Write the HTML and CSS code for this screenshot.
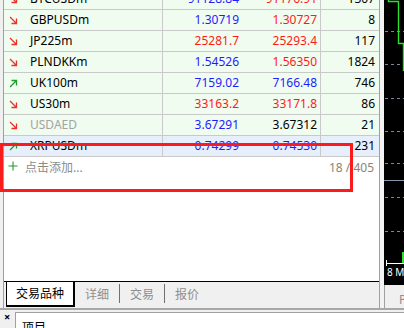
FILE: index.html
```html
<!DOCTYPE html>
<html lang="zh-CN">
<head>
    <meta charset="UTF-8">
    <title>市场报价</title>
    <link rel="stylesheet" href="styles.css">
</head>
<body>

    <div class="workspace">
        <!-- Market watch panel -->
        <div class="watch">
            <div class="quotes">
                <div class="quote-list">
                    <div class="row">
                        <div class="cell symbol"><svg class="arrow" viewBox="0 0 9 9"><path d="M1 1 L7.5 7.5 M2.5 7.5 H7.5 V2.5" stroke="#e8332b" stroke-width="1.3" fill="none"/></svg>BTCUSDm</div>
                        <div class="cell num bid blue">91128.84</div>
                        <div class="cell num red">91176.91</div>
                        <div class="cell num">1307</div>
                    </div>
                    <div class="row">
                        <div class="cell symbol"><svg class="arrow" viewBox="0 0 9 9"><path d="M1 1 L7.5 7.5 M2.5 7.5 H7.5 V2.5" stroke="#e8332b" stroke-width="1.3" fill="none"/></svg>GBPUSDm</div>
                        <div class="cell num bid blue">1.30719</div>
                        <div class="cell num red">1.30727</div>
                        <div class="cell num">8</div>
                    </div>
                    <div class="row">
                        <div class="cell symbol"><svg class="arrow" viewBox="0 0 9 9"><path d="M1 1 L7.5 7.5 M2.5 7.5 H7.5 V2.5" stroke="#e8332b" stroke-width="1.3" fill="none"/></svg>JP225m</div>
                        <div class="cell num bid red">25281.7</div>
                        <div class="cell num red">25293.4</div>
                        <div class="cell num">117</div>
                    </div>
                    <div class="row">
                        <div class="cell symbol"><svg class="arrow" viewBox="0 0 9 9"><path d="M1 1 L7.5 7.5 M2.5 7.5 H7.5 V2.5" stroke="#e8332b" stroke-width="1.3" fill="none"/></svg>PLNDKKm</div>
                        <div class="cell num bid blue">1.54526</div>
                        <div class="cell num red">1.56350</div>
                        <div class="cell num">1824</div>
                    </div>
                    <div class="row">
                        <div class="cell symbol"><svg class="arrow" viewBox="0 0 9 9"><path d="M1 8 L7.5 1.5 M2.5 1.5 H7.5 V6.5" stroke="#1f9a2c" stroke-width="1.3" fill="none"/></svg>UK100m</div>
                        <div class="cell num bid blue">7159.02</div>
                        <div class="cell num blue">7166.48</div>
                        <div class="cell num">746</div>
                    </div>
                    <div class="row">
                        <div class="cell symbol"><svg class="arrow" viewBox="0 0 9 9"><path d="M1 1 L7.5 7.5 M2.5 7.5 H7.5 V2.5" stroke="#e8332b" stroke-width="1.3" fill="none"/></svg>US30m</div>
                        <div class="cell num bid red">33163.2</div>
                        <div class="cell num red">33171.8</div>
                        <div class="cell num">86</div>
                    </div>
                    <div class="row">
                        <div class="cell symbol muted"><svg class="arrow" viewBox="0 0 9 9"><path d="M1 1 L7.5 7.5 M2.5 7.5 H7.5 V2.5" stroke="#e8332b" stroke-width="1.3" fill="none"/></svg>USDAED</div>
                        <div class="cell num bid blue">3.67291</div>
                        <div class="cell num">3.67312</div>
                        <div class="cell num">21</div>
                    </div>
                    <div class="row selected">
                        <div class="cell symbol"><svg class="arrow" viewBox="0 0 9 9"><path d="M1 8 L7.5 1.5 M2.5 1.5 H7.5 V6.5" stroke="#1f9a2c" stroke-width="1.3" fill="none"/></svg>XRPUSDm</div>
                        <div class="cell num bid blue">0.74299</div>
                        <div class="cell num blue">0.74530</div>
                        <div class="cell num">231</div>
                    </div>
                    <div class="add-row">
                        <svg class="plus" viewBox="0 0 10 10"><path d="M5 0.5 V9.5 M0.5 5 H9.5" stroke="#1f9a2c" stroke-width="1.1" fill="none"/></svg>
                        <span class="add-text">点击添加...</span>
                        <span class="count">18 / 405</span>
                    </div>
                </div>
            </div>

            <!-- Bottom tabs -->
            <div class="tabs">
                <div class="tab active">交易品种</div>
                <div class="tab">详细</div>
                <div class="tab">交易</div>
                <div class="tab last">报价</div>
            </div>
        </div>

        <div class="splitter"></div>

        <!-- Chart window (only its left edge is visible) -->
        <div class="chart">
            <div class="chart-view">
                <svg class="chart-svg" viewBox="0 0 20 285" width="20" height="285">
                    <g stroke="#7d8894" stroke-width="1" stroke-dasharray="3 3">
                        <line x1="1" y1="31.5" x2="20" y2="31.5"/>
                        <line x1="1" y1="64.5" x2="20" y2="64.5"/>
                        <line x1="1" y1="98.5" x2="20" y2="98.5"/>
                        <line x1="1" y1="131.5" x2="20" y2="131.5"/>
                        <line x1="1" y1="163.5" x2="20" y2="163.5"/>
                        <line x1="1" y1="197.5" x2="20" y2="197.5"/>
                        <line x1="1" y1="231.5" x2="20" y2="231.5"/>
                    </g>
                    <line x1="0" y1="180.5" x2="20" y2="180.5" stroke="#8696ad" stroke-width="1"/>
                    <path d="M4.5 0 V1.5 H14.5 V43.5 H19.5 V71" stroke="#2ee02e" stroke-width="1.4" fill="none"/>
                    <rect x="18" y="252" width="2" height="11" fill="#2ee02e"/>
                    <line x1="2" y1="263.5" x2="20" y2="263.5" stroke="#fff" stroke-width="1"/>
                    <line x1="2.5" y1="260" x2="2.5" y2="266" stroke="#fff" stroke-width="1"/>
                </svg>
                <span class="axis-label">8 M</span>
            </div>
            <div class="chart-tabs">P</div>
        </div>
    </div>

    <!-- Toolbox panel below -->
    <div class="toolbox">
        <span class="close">×</span>
        <div class="toolbox-body">项目</div>
    </div>

    <!-- Red highlight drawn over the add row -->
    <div class="highlight"></div>

</body>
</html>
```

FILE: styles.css
```css
body {
    margin: 0;
    width: 404px;
    height: 328px;
    overflow: hidden;
    position: relative;
    font-family: 'Noto Sans', 'Noto Sans CJK SC', sans-serif;
    font-size: 12px;
    color: #000;
    background-color: #f0f0f0;
}

.workspace {
    display: flex;
    height: 310px;
    padding-left: 3px;
    box-sizing: border-box;
    border-bottom: 2px solid #a8a8a8;
}

/* Market watch */
.watch {
    width: 377px;
    display: flex;
    flex-direction: column;
    border-left: 1px solid #a0a0a0;
    border-right: 1px solid #a0a0a0;
    box-sizing: border-box;
}

.quotes {
    flex: 1;
    background-color: #fff;
    overflow: hidden;
}

.quote-list {
    margin-top: -11px;
}

.row {
    display: grid;
    grid-template-columns: 159px 80px 78px 1fr;
    height: 21px;
    line-height: 20px;
    background-color: #f0fcf0;
    border-bottom: 1px solid #c9c9c9;
    box-sizing: border-box;
}

.row.selected {
    background-color: #e6effb;
}

.cell {
    border-right: 1px solid #c9c9c9;
    white-space: nowrap;
    overflow: hidden;
}

.cell.bid,
.cell:last-child {
    border-right: none;
}

.symbol {
    display: flex;
    align-items: center;
    padding-left: 5px;
}

.symbol.muted {
    color: #a3a3a3;
}

.arrow {
    width: 9px;
    height: 9px;
    margin-right: 12px;
    flex-shrink: 0;
}

.num {
    text-align: right;
    padding-right: 3px;
}

.bid {
    padding-right: 4px;
}

.num:last-child {
    padding-right: 4px;
}

.blue {
    color: #1e1eff;
}

.red {
    color: #ff1a1a;
}

/* Add symbol row */
.add-row {
    display: flex;
    align-items: center;
    height: 20px;
    padding: 0 5px 0 4px;
    color: #8a8a8a;
}

.plus {
    width: 10px;
    height: 10px;
    margin: -3px 7px 0 0;
    flex-shrink: 0;
}

.count {
    margin-left: auto;
    color: #8d8378;
}

/* Tabs */
.tabs {
    display: flex;
    align-items: flex-start;
    height: 27px;
    border-top: 1px solid #000;
    box-sizing: border-box;
    padding-left: 2px;
}

.tab {
    padding: 2px 10px 0;
    height: 17px;
    line-height: 17px;
    margin-top: 2px;
    color: #8e8e8e;
    border-right: 1px solid #707070;
}

.tab.last {
    border-right: none;
}

.tab.active {
    margin-top: 0;
    height: 20px;
    padding: 3px 9px 0;
    line-height: 17px;
    background-color: #fff;
    color: #000;
    border: 1px solid #000;
    border-top: none;
    border-right-width: 2px;
    border-bottom-width: 2px;
    border-bottom-left-radius: 1px;
}

.splitter {
    width: 4px;
    background-color: #f3f3f3;
}

/* Chart */
.chart {
    flex: 1;
    display: flex;
    flex-direction: column;
    overflow: hidden;
}

.chart-view {
    position: relative;
    height: 285px;
    background-color: #000;
}

.chart-svg {
    display: block;
}

.axis-label {
    position: absolute;
    left: 3px;
    top: 265px;
    font-size: 10px;
    color: #fff;
    white-space: nowrap;
}

.chart-tabs {
    flex: 1;
    border-left: 1px solid #a0a0a0;
    padding: 6px 0 0 14px;
    color: #8e8e8e;
}

/* Toolbox */
.toolbox {
    display: flex;
    align-items: flex-start;
    height: 18px;
    padding-top: 2px;
    box-sizing: border-box;
}

.close {
    width: 15px;
    padding-left: 4px;
    box-sizing: border-box;
    font-size: 11px;
    font-weight: bold;
    line-height: 12px;
    margin-top: -1px;
}

.toolbox-body {
    flex: 1;
    background-color: #fff;
    border-top: 1px solid #a0a0a0;
    border-left: 1px solid #a0a0a0;
    padding: 5px 0 0 6px;
    height: 20px;
}

.highlight {
    position: absolute;
    left: 0;
    top: 143px;
    width: 353px;
    height: 49px;
    border: 3px solid #fa1c1c;
    box-sizing: border-box;
}
```
